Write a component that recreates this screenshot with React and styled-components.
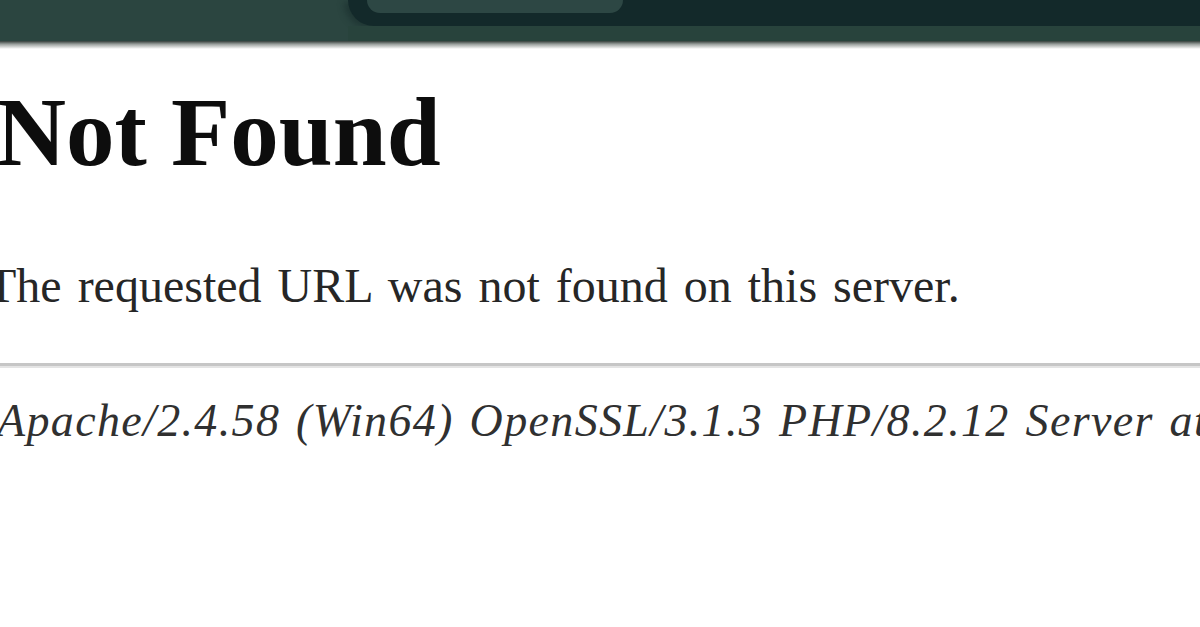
import React from 'react';
import styled, { createGlobalStyle } from 'styled-components';

const GlobalStyle = createGlobalStyle`
  html, body {
    margin: 0;
    padding: 0;
    background: #ffffff;
  }
  body {
    width: 1200px;
    height: 627px;
    overflow: hidden;
    font-family: "Liberation Serif", "Times New Roman", serif;
  }
`;

const Page = styled.div`
  width: 1200px;
  height: 627px;
  overflow: hidden;
  display: flex;
  flex-direction: column;
`;

const Toolbar = styled.div`
  height: 41px;
  background: #2b4540;
  display: flex;
  flex-direction: column;
`;

const TopRow = styled.div`
  height: 26px;
  display: flex;
`;

const Spacer = styled.div`
  width: 348px;
  flex-shrink: 0;
`;

const TabStrip = styled.div`
  flex: 1;
  background: #13292a;
  border-bottom-left-radius: 26px;
  padding-left: 19px;
  box-shadow: -4px 2px 6px rgba(20, 40, 40, 0.5);
`;

const Tab = styled.div`
  width: 256px;
  height: 13px;
  background: #2d4744;
  border-radius: 0 0 16px 16px;
`;

const LowerStrip = styled.div`
  flex: 1;
  background: #28433c;
  margin-left: 348px;
`;

const Shadow = styled.div`
  height: 8px;
  background: linear-gradient(#35403c, #9aa09d 40%, #ffffff);
`;

const Content = styled.div`
  display: flex;
  flex-direction: column;
  white-space: nowrap;
`;

const Heading = styled.h1`
  margin: 35px 0 0 -4px;
  font-size: 97px;
  line-height: 97px;
  font-weight: bold;
  color: #0d0d0d;
`;

const Message = styled.p`
  margin: 81px 0 0 -13px;
  font-size: 48px;
  line-height: 48px;
  color: #262626;
  word-spacing: 4px;
`;

const Rule = styled.hr`
  margin: 53px 0 0 0;
  height: 0;
  border: 0;
  border-top: 3px solid #c6c6c6;
  border-bottom: 2px solid #e4e4e4;
`;

const Address = styled.address`
  margin: 30px 0 0 -3px;
  font-size: 46px;
  line-height: 46px;
  font-style: italic;
  color: #303030;
  letter-spacing: 1.35px;
  word-spacing: 3px;
`;

export default function App() {
  return (
    <>
      <GlobalStyle />
      <Page>
        <Toolbar>
          <TopRow>
            <Spacer />
            <TabStrip>
              <Tab />
            </TabStrip>
          </TopRow>
          <LowerStrip />
        </Toolbar>
        <Shadow />
        <Content>
          <Heading>Not Found</Heading>
          <Message>The requested URL was not found on this server.</Message>
          <Rule />
          <Address>Apache/2.4.58 (Win64) OpenSSL/3.1.3 PHP/8.2.12 Server at localhost Port 80</Address>
        </Content>
      </Page>
    </>
  );
}
